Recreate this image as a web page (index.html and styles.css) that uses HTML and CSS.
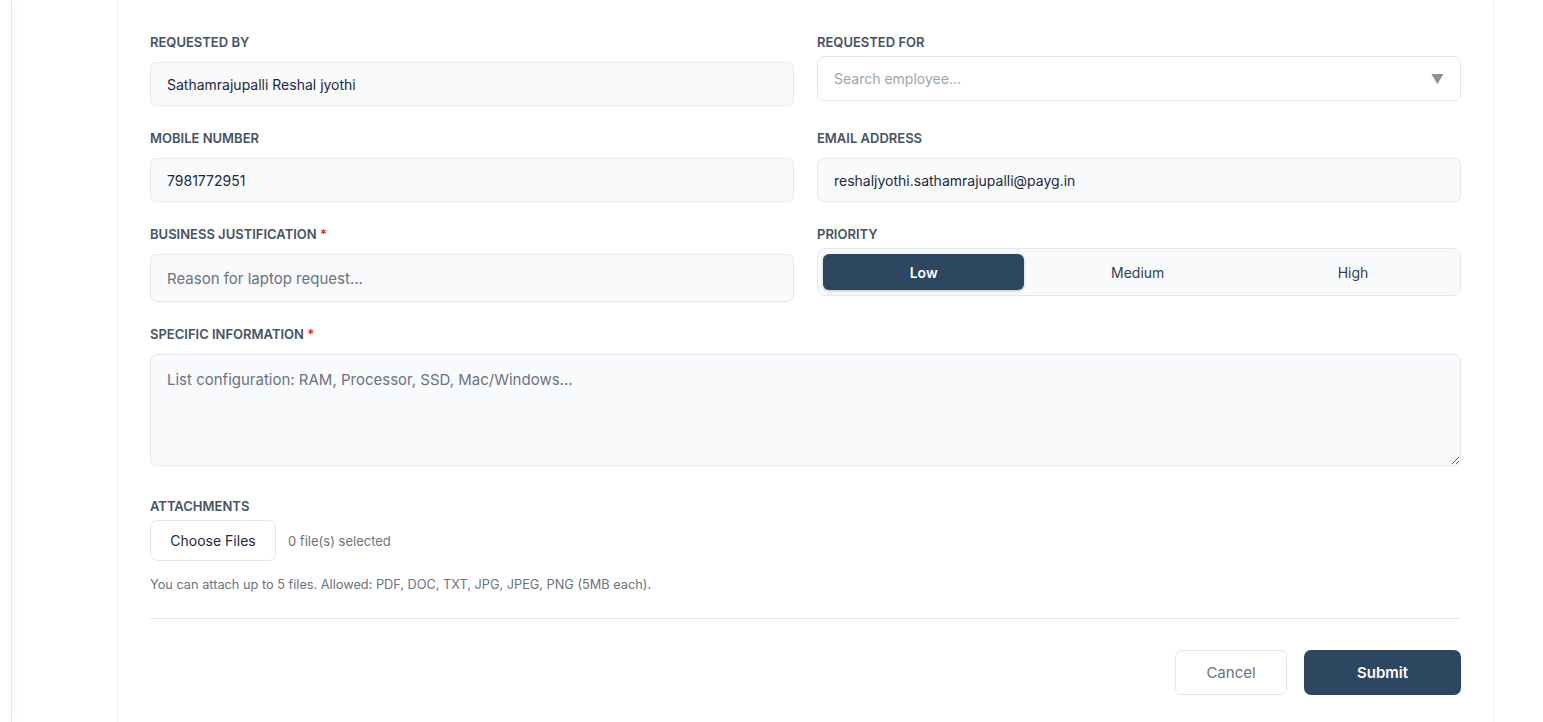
FILE: index.html
```html
<!DOCTYPE html>
<html>
<head>
<link rel="stylesheet" href="styles.css">
</head>
<body>

<div class="layout">
  <aside class="rail"></aside>

  <main class="main">
    <form class="card">
      <div class="grid">
        <div class="field">
          <label class="label">Requested by</label>
          <input class="input" type="text" value="Sathamrajupalli Reshal jyothi" readonly>
        </div>

        <div class="field">
          <label class="label tight">Requested for</label>
          <div class="search-select">
            <input class="search-input" type="text" placeholder="Search employee...">
            <span class="caret">&#9660;</span>
          </div>
        </div>

        <div class="field">
          <label class="label">Mobile number</label>
          <input class="input" type="text" value="7981772951" readonly>
        </div>

        <div class="field">
          <label class="label">Email address</label>
          <input class="input" type="text" value="reshaljyothi.sathamrajupalli@payg.in" readonly>
        </div>

        <div class="field">
          <label class="label">Business justification <span class="req">*</span></label>
          <input class="input tall" type="text" placeholder="Reason for laptop request...">
        </div>

        <div class="field">
          <label class="label tight">Priority</label>
          <div class="segmented">
            <button type="button" class="seg active">Low</button>
            <button type="button" class="seg">Medium</button>
            <button type="button" class="seg">High</button>
          </div>
        </div>

        <div class="field wide">
          <label class="label">Specific information <span class="req">*</span></label>
          <textarea class="textarea" placeholder="List configuration: RAM, Processor, SSD, Mac/Windows..."></textarea>
        </div>

        <div class="field wide attachments">
          <label class="label tight">Attachments</label>
          <div class="file-row">
            <button type="button" class="file-btn">Choose Files</button>
            <span class="file-count">0 file(s) selected</span>
          </div>
          <p class="hint">You can attach up to 5 files. Allowed: PDF, DOC, TXT, JPG, JPEG, PNG (5MB each).</p>
        </div>
      </div>

      <div class="actions">
        <button type="button" class="btn btn-cancel">Cancel</button>
        <button type="submit" class="btn btn-submit">Submit</button>
      </div>
    </form>
  </main>
</div>

</body>
</html>
```

FILE: styles.css
```css
* {
  box-sizing: border-box;
}

html, body {
  margin: 0;
  padding: 0;
  height: 100%;
  overflow: hidden;
  background: #fff;
  font-family: Inter, "Noto Sans", sans-serif;
  color: #1e293b;
}

.layout {
  display: flex;
  height: 100%;
}

.rail {
  width: 12px;
  flex-shrink: 0;
  border-right: 1px solid #e3e7ef;
  box-shadow: 3px 0 8px rgba(15, 23, 42, 0.03);
}

.main {
  flex: 1;
  padding: 0 49px 0 105px;
}

.card {
  margin-top: -8px;
  background: #fff;
  border: 1px solid #f0f2f5;
  border-radius: 12px;
  box-shadow: 0 1px 4px rgba(15, 23, 42, 0.03);
  padding: 41px 32px 40px;
}

.grid {
  display: grid;
  grid-template-columns: 1fr 1fr;
  column-gap: 23px;
  row-gap: 24px;
}

.field {
  display: flex;
  flex-direction: column;
}

.wide {
  grid-column: 1 / 3;
}

.attachments {
  margin-top: 8px;
}

.label {
  font-size: 13px;
  line-height: 16px;
  font-weight: 600;
  text-transform: uppercase;
  color: #465264;
  margin-bottom: 12px;
}

.label.tight {
  margin-bottom: 6px;
}

.req {
  color: #e11d2a;
}

.input {
  height: 44px;
  width: 100%;
  padding: 0 16px;
  font-family: inherit;
  font-size: 14px;
  color: #1e293b;
  background: #f8fafc;
  border: 1px solid #e2e8f0;
  border-radius: 7px;
  outline: none;
}

.input.tall {
  height: 48px;
  font-size: 15px;
}

.input::placeholder,
.textarea::placeholder {
  color: #6b7280;
}

.search-select {
  height: 45px;
  display: flex;
  align-items: center;
  padding: 0 16px;
  background: #fff;
  border: 1px solid #e2e8f0;
  border-radius: 7px;
}

.search-input {
  flex: 1;
  border: none;
  outline: none;
  padding: 0;
  font-family: inherit;
  font-size: 14px;
  background: transparent;
}

.search-input::placeholder {
  color: #9ca3af;
}

.caret {
  color: #8a8f98;
  font-size: 13px;
}

.segmented {
  height: 48px;
  display: flex;
  padding: 5px;
  background: #f8fafc;
  border: 1px solid #e2e8f0;
  border-radius: 8px;
}

.seg {
  flex-grow: 1;
  border: none;
  background: transparent;
  font-family: inherit;
  font-size: 14px;
  font-weight: 400;
  color: #334155;
  border-radius: 6px;
  padding: 0 12px;
}

.seg.active {
  background: #2d4760;
  color: #fff;
  font-weight: 600;
  box-shadow: 0 1px 3px rgba(15, 23, 42, 0.25);
}

.textarea {
  height: 112px;
  width: 100%;
  padding: 15px 16px;
  font-family: inherit;
  font-size: 15px;
  line-height: 20px;
  background: #f8fafc;
  border: 1px solid #e2e8f0;
  border-radius: 7px;
  outline: none;
}

.file-row {
  display: flex;
  align-items: center;
  gap: 12px;
}

.file-btn {
  height: 41px;
  width: 126px;
  background: #fff;
  border: 1px solid #e2e8f0;
  border-radius: 7px;
  font-family: inherit;
  font-size: 14px;
  font-weight: 400;
  color: #1e293b;
}

.file-count {
  font-size: 13px;
  color: #6b7280;
}

.hint {
  margin: 16px 0 0;
  font-size: 12.75px;
  line-height: 16px;
  color: #6b7280;
}

.actions {
  margin-top: 25px;
  padding-top: 31px;
  border-top: 1px solid #e2e8f0;
  display: flex;
  justify-content: flex-end;
  gap: 17px;
}

.btn {
  height: 45px;
  border-radius: 7px;
  font-family: inherit;
  font-size: 15px;
}

.btn-cancel {
  width: 112px;
  background: #fff;
  border: 1px solid #e2e8f0;
  color: #64748b;
}

.btn-submit {
  width: 157px;
  background: #2d4760;
  border: none;
  color: #fff;
  font-weight: 600;
}
```
